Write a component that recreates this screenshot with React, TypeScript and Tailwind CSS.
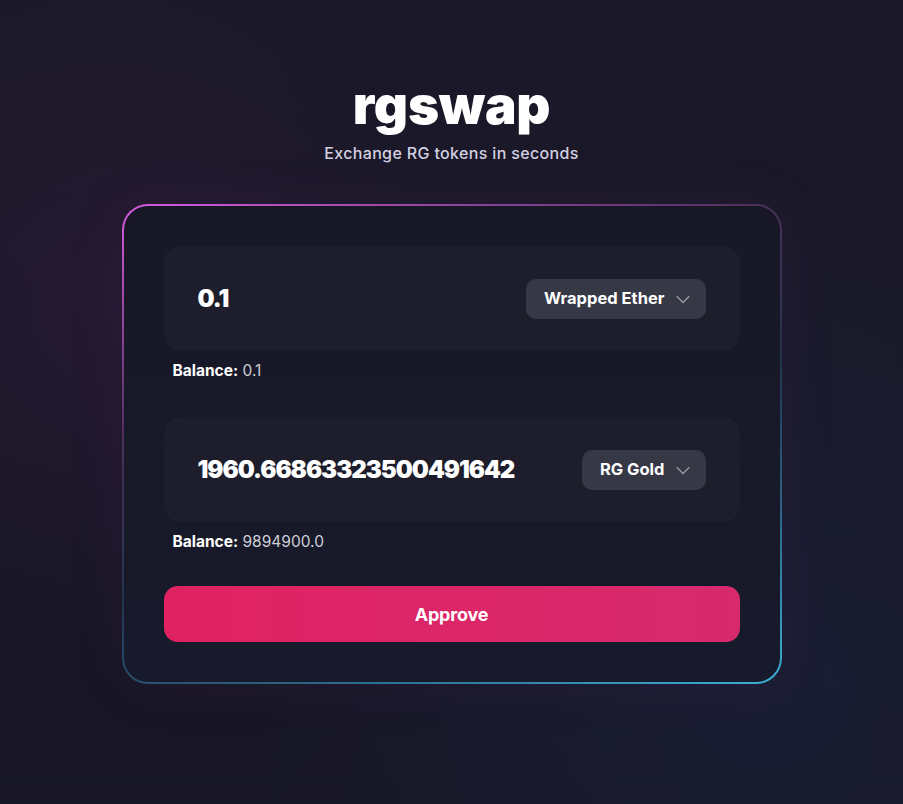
import React from "react";

function Chevron() {
  return (
    <svg width="16" height="16" viewBox="0 0 16 16" fill="none" className="ml-[10px]">
      <path d="M2 5.5 L8 11.5 L14 5.5" stroke="#9a9aa8" strokeWidth="1.3" strokeLinecap="round" strokeLinejoin="round" />
    </svg>
  );
}

function TokenRow({ amount, token, balance }: { amount: string; token: string; balance: string }) {
  return (
    <div className="flex flex-col">
      <div className="flex h-[105px] items-center justify-between rounded-[16px] bg-[#1d1d2c] pl-[34px] pr-[34px]">
        <span className="text-[24px] font-black tracking-[-1px] text-white">{amount}</span>
        <button className="flex h-[40px] items-center rounded-[10px] bg-[#373845] pl-[18px] pr-[15px] text-[16.5px] font-bold tracking-[0px] text-white">
          {token}
          <Chevron />
        </button>
      </div>
      <div className="mt-[9px] pl-[9px] text-[15.5px] leading-[22px] text-white">
        <span className="font-bold">Balance:</span>{" "}
        <span className="font-normal text-[#cfcfd8]">{balance}</span>
      </div>
    </div>
  );
}

export default function App() {
  return (
    <div
      className="flex min-h-[804px] w-full flex-col items-center bg-[#181727] bg-[radial-gradient(circle_at_12%_38%,rgba(110,30,110,0.13),transparent_35%),radial-gradient(circle_at_85%_85%,rgba(30,45,80,0.3),transparent_50%),linear-gradient(180deg,#1b1929_0%,#171625_100%)] text-white"
      style={{ fontFamily: "Inter, 'Noto Sans', sans-serif" }}
    >
      <h1 className="mt-[75px] text-[53px] font-black leading-[60px] tracking-[-0.2px] text-white">rgswap</h1>
      <p className="mt-[7px] text-[16px] font-medium leading-[22px] tracking-[0.35px] text-[#d4d0e2]">Exchange RG tokens in seconds</p>

      <div className="mt-[40px] w-[660px] rounded-[26px] bg-[linear-gradient(160deg,#d65ce0_0%,#4a2f5a_33%,#22344e_55%,#2c6282_75%,#3cb0d8_100%)] p-[2px] shadow-[0_0_60px_rgba(150,50,160,0.08)]">
        <div className="flex flex-col rounded-[24px] bg-[linear-gradient(180deg,#181726_0%,#171a2b_100%)] px-[40px] pb-[40px] pt-[40px]">
          <TokenRow amount="0.1" token="Wrapped Ether" balance="0.1" />
          <div className="h-[35px]" />
          <TokenRow amount="1960.66863323500491642" token="RG Gold" balance="9894900.0" />
          <button className="mt-[33px] h-[56px] w-full rounded-[14px] bg-[linear-gradient(90deg,#e12262_0%,#d62a6d_100%)] text-[18px] font-bold tracking-[-0.2px] text-white">
            Approve
          </button>
        </div>
      </div>
    </div>
  );
}
